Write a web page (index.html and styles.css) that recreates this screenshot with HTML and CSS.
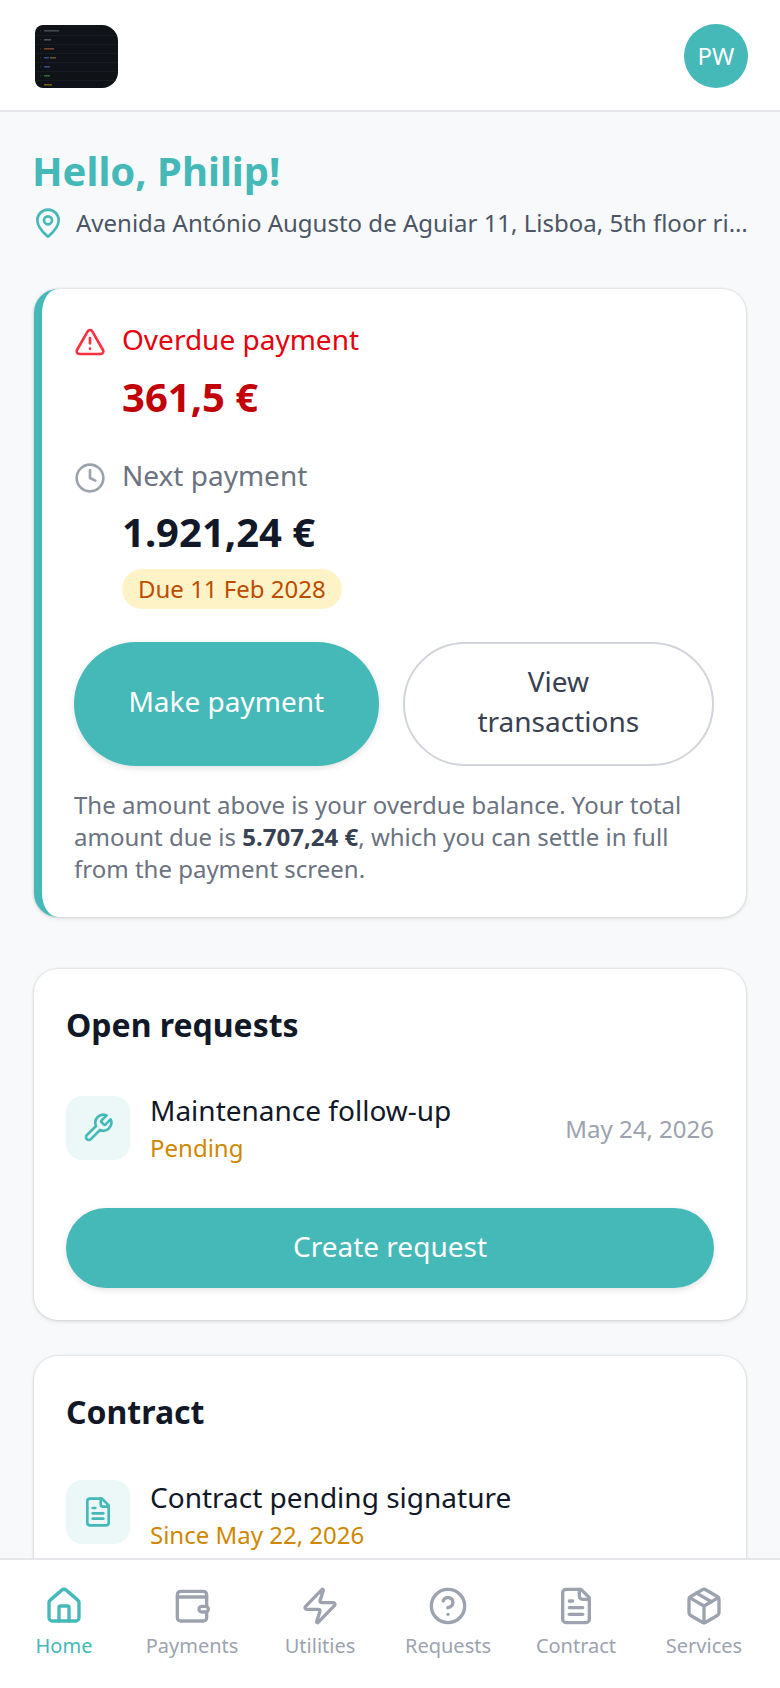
FILE: index.html
```html
<!DOCTYPE html>
<html lang="en">
<head>
<meta charset="utf-8">
<title>Home</title>
<link rel="stylesheet" href="styles.css">
</head>
<body>
<div class="app">
  <header class="topbar">
    <div class="logo">
      <svg viewBox="0 0 83 63" width="83" height="63"><g class="logo-rows">
        <path class="logo-lines" d="M0 10.500h83M0 19.500h83M0 28.500h83M0 37.500h83M0 46.500h83M0 55.500h83"/>
        <rect x="5" y="5.300" width="1" height="1" fill="#4a4f55"/>
        <rect x="5" y="14.300" width="1" height="1" fill="#4a4f55"/>
        <rect x="5" y="23.300" width="1" height="1" fill="#4a4f55"/>
        <rect x="5" y="32.300" width="1" height="1" fill="#4a4f55"/>
        <rect x="5" y="41.300" width="1" height="1" fill="#4a4f55"/>
        <rect x="5" y="50.300" width="1" height="1" fill="#4a4f55"/>
        <rect x="9" y="5" width="15" height="1.600" fill="#5a5f66"/>
        <rect x="9" y="14" width="7" height="1.600" fill="#6a6d70"/>
        <rect x="9" y="23" width="10" height="1.600" fill="#a8562e"/>
        <rect x="9" y="32" width="5" height="1.600" fill="#3f68b0"/>
        <rect x="15" y="32" width="6" height="1.600" fill="#8a6f30"/>
        <rect x="9" y="41" width="6" height="1.600" fill="#3f68b0"/>
        <rect x="9" y="50" width="6" height="1.600" fill="#3f8a3f"/>
        <rect x="9" y="59" width="8" height="1.600" fill="#9a7a20"/>
      </g></svg>
    </div>
    <div class="avatar">PW</div>
  </header>
  <main class="content">
    <h1 class="hello">Hello, Philip!</h1>
    <div class="address">
      <svg class="icon-32 teal" viewBox="0 0 24 24"><path d="M20 10c0 4.993-5.539 10.193-7.399 11.799a1 1 0 0 1-1.202 0C9.539 20.193 4 14.993 4 10a8 8 0 0 1 16 0"/><circle cx="12" cy="10" r="3"/></svg>
      <span class="address-text">Avenida António Augusto de Aguiar 11, Lisboa, 5th floor right</span>
    </div>
    <section class="card pay-card">
      <div class="pay-row">
        <svg class="icon-32 red" viewBox="0 0 24 24"><path d="m21.730 18-8-14a2 2 0 0 0-3.480 0l-8 14A2 2 0 0 0 4 21h16a2 2 0 0 0 1.730-3"/><path d="M12 9v4"/><path d="M12 17h.01"/></svg>
        <div class="pay-label overdue">Overdue payment</div>
      </div>
      <div class="amount amount-red">361,5 €</div>
      <div class="pay-row next-row">
        <svg class="icon-32 grey" viewBox="0 0 24 24"><circle cx="12" cy="12" r="10"/><polyline points="12 6 12 12 16 14"/></svg>
        <div class="pay-label">Next payment</div>
      </div>
      <div class="amount amount-next">1.921,24 €</div>
      <div class="badge">Due 11 Feb 2028</div>
      <div class="actions">
        <button class="btn btn-primary">Make payment</button>
        <button class="btn btn-outline">View transactions</button>
      </div>
      <p class="note">The amount above is your overdue balance. Your total amount due is <strong>5.707,24 €</strong>, which you can settle in full from the payment screen.</p>
    </section>
    <section class="card">
      <h2 class="card-title">Open requests</h2>
      <div class="item">
        <div class="tile tile-request">
          <svg class="icon-32 teal" viewBox="0 0 24 24"><path d="M14.700 6.300a1 1 0 0 0 0 1.400l1.600 1.600a1 1 0 0 0 1.400 0l3.770-3.770a6 6 0 0 1-7.940 7.940l-6.910 6.910a2.120 2.120 0 0 1-3-3l6.910-6.910a6 6 0 0 1 7.940-7.940l-3.760 3.760z"/></svg>
        </div>
        <div class="item-body">
          <div class="item-title">Maintenance follow-up</div>
          <div class="item-status">Pending</div>
        </div>
        <div class="item-date">May 24, 2026</div>
      </div>
      <button class="create-btn">Create request</button>
    </section>
    <section class="card">
      <h2 class="card-title">Contract</h2>
      <div class="item">
        <div class="tile tile-contract">
          <svg class="icon-32 teal" viewBox="0 0 24 24"><path d="M15 2H6a2 2 0 0 0-2 2v16a2 2 0 0 0 2 2h12a2 2 0 0 0 2-2V7Z"/><path d="M14 2v4a2 2 0 0 0 2 2h4"/><path d="M10 9H8"/><path d="M16 13H8"/><path d="M16 17H8"/></svg>
        </div>
        <div class="item-body">
          <div class="item-title">Contract pending signature</div>
          <div class="item-status">Since May 22, 2026</div>
        </div>
      </div>
    </section>
  </main>
  <nav class="tabbar">
    <a class="tab tab-active">
      <svg class="icon-40" viewBox="0 0 24 24"><path d="M15 21v-8a1 1 0 0 0-1-1h-4a1 1 0 0 0-1 1v8"/><path d="M3 10a2 2 0 0 1 .709-1.528l7-5.999a2 2 0 0 1 2.582 0l7 5.999A2 2 0 0 1 21 10v9a2 2 0 0 1-2 2H5a2 2 0 0 1-2-2z"/></svg>
      <span>Home</span>
    </a>
    <a class="tab">
      <svg class="icon-40" viewBox="0 0 24 24"><path d="M20.800 12V5.200a2 2 0 0 0-2-2H5.200a2 2 0 0 0-2 2V19a2 2 0 0 0 2 2h13.600a2 2 0 0 0 2-2v-3.400"/><path d="M3.200 6.600h17.600"/><rect x="16.200" y="12.200" width="5.600" height="3.400" rx="1.700"/></svg>
      <span>Payments</span>
    </a>
    <a class="tab">
      <svg class="icon-40" viewBox="0 0 24 24"><path d="M4 14a1 1 0 0 1-.78-1.630l9.900-10.200a.5.5 0 0 1 .86.46l-1.920 6.020A1 1 0 0 0 13 10h7a1 1 0 0 1 .78 1.630l-9.900 10.200a.5.5 0 0 1-.86-.46l1.920-6.020A1 1 0 0 0 11 14z"/></svg>
      <span>Utilities</span>
    </a>
    <a class="tab">
      <svg class="icon-40" viewBox="0 0 24 24"><circle cx="12" cy="12" r="10"/><path d="M9.090 9a3 3 0 0 1 5.830 1c0 2-3 3-3 3"/><path d="M12 17h.01"/></svg>
      <span>Requests</span>
    </a>
    <a class="tab">
      <svg class="icon-40" viewBox="0 0 24 24"><path d="M15 2H6a2 2 0 0 0-2 2v16a2 2 0 0 0 2 2h12a2 2 0 0 0 2-2V7Z"/><path d="M14 2v4a2 2 0 0 0 2 2h4"/><path d="M10 9H8"/><path d="M16 13H8"/><path d="M16 17H8"/></svg>
      <span>Contract</span>
    </a>
    <a class="tab">
      <svg class="icon-40" viewBox="0 0 24 24"><path d="M11 21.730a2 2 0 0 0 2 0l7-4A2 2 0 0 0 21 16V8a2 2 0 0 0-1-1.730l-7-4a2 2 0 0 0-2 0l-7 4A2 2 0 0 0 3 8v8a2 2 0 0 0 1 1.730z"/><path d="M12 22V12"/><polyline points="3.290 7 12 12 20.710 7"/><path d="m7.500 4.270 9 5.150"/></svg>
      <span>Services</span>
    </a>
  </nav>
</div>
</body>
</html>
```

FILE: styles.css
```css
* { box-sizing: border-box; }
html, body { margin: 0; height: 100%; }
body { font-family: "Noto Sans", sans-serif; color: #111827; background: #f8f9fb; }
svg { display: block; flex: none; fill: none; stroke: currentColor; stroke-width: 2; stroke-linecap: round; stroke-linejoin: round; }
.app { height: 1688px; display: flex; flex-direction: column; overflow: hidden; }

.topbar { flex: none; height: 112px; padding: 24px 32px 22px 35px; display: flex; align-items: flex-start; justify-content: space-between; background: #fff; border-bottom: 2px solid #e5e7eb; }
.logo { width: 83px; height: 63px; margin-top: 1px; background: #0f1318; border-radius: 8px 16px 16px 8px; overflow: hidden; }
.logo svg { stroke: none; }
.logo-rows { filter: blur(0.6px); opacity: .7; }
.logo-lines { stroke: #1c2128; stroke-width: 1; }
.avatar { width: 64px; height: 64px; padding-bottom: 2px; border-radius: 50%; background: #45b8b8; color: #fff; font-size: 24px; display: flex; align-items: center; justify-content: center; }

.content { flex: 1; min-height: 0; overflow: hidden; padding: 29px 32px 0; display: flex; flex-direction: column; gap: 32px; }
.hello { margin: 0 0 -26px; font-size: 40px; line-height: 60px; font-weight: 700; color: #45b8b8; }
.address { display: flex; align-items: center; gap: 12px; font-size: 24px; line-height: 32px; color: #4b5563; margin-bottom: 16px; }
.address-text { min-width: 0; white-space: nowrap; overflow: hidden; text-overflow: ellipsis; }
.teal { color: #45b8b8; }
.red { color: #ff3040; }
.grey { color: #9ca3af; }
.icon-32 { width: 32px; height: 32px; }
.icon-40 { width: 40px; height: 40px; }

.card { flex: none; margin: 2px; background: #fff; border-radius: 24px; padding: 32px; box-shadow: 0 0 2px 1px rgba(0,0,0,.09), 0 2px 4px rgba(0,0,0,.08); }
.pay-card { border-left: 8px solid #45b8b8; padding-top: 30px; margin-bottom: 18px; }
.pay-row { display: flex; align-items: flex-start; gap: 16px; }
.pay-row svg { margin-top: 7px; }
.pay-label { font-size: 28px; line-height: 40px; color: #6b7280; }
.overdue { color: #e7000b; }
.next-row { margin-top: 30px; }
.amount { margin: 10px 0 0 48px; font-size: 40px; line-height: 56px; font-weight: 700; color: #111827; }
.amount-next { margin-top: 9px; }
.amount-red { color: #c10007; }
.badge { display: inline-block; margin: 9px 0 0 48px; padding: 0 16px; height: 40px; line-height: 40px; border-radius: 20px; background: #fef3c7; color: #bb4d00; font-size: 24px; }
.actions { display: flex; gap: 24px; margin-top: 33px; }
.btn { height: 124px; border-radius: 62px; font: inherit; font-size: 28px; line-height: 40px; padding: 0 48px 7px; }
.btn-primary { flex: 306 1 0; background: #45b8b8; color: #fff; border: none; box-shadow: 0 2px 6px rgba(0,0,0,.12); }
.btn-outline { flex: 310 1 0; background: #fff; color: #374151; border: 2px solid #d1d5db; padding-bottom: 6px; }
.note { margin: 23px 0 0; font-size: 24px; line-height: 32px; color: #6b7280; }
.note strong { color: #374151; font-weight: 700; }

.card-title { margin: 0 0 41px; font-size: 32px; line-height: 48px; font-weight: 700; color: #111827; }
.item { display: flex; align-items: flex-start; gap: 20px; }
.tile { flex: none; width: 64px; height: 64px; border-radius: 16px; background: #ecf8f8; display: flex; align-items: center; justify-content: center; }
.tile-request { margin-top: 6px; }
.tile-contract { margin-top: 3px; }
.item-body { flex: 1; min-width: 0; }
.item-title { font-size: 28px; line-height: 40px; color: #111827; }
.item-status { font-size: 24px; line-height: 36px; color: #d08700; }
.item-date { align-self: center; font-size: 24px; color: #9ca3af; }
.create-btn { display: block; width: 100%; height: 80px; margin-top: 42px; padding: 0 0 5px; border: none; border-radius: 40px; background: #45b8b8; color: #fff; font: inherit; font-size: 28px; box-shadow: 0 2px 6px rgba(0,0,0,.12); }

.tabbar { flex: none; height: 130px; padding: 26px 12px 0 0; display: flex; background: #fff; border-top: 2px solid #e5e7eb; }
.tab { flex: 1; display: flex; flex-direction: column; align-items: center; gap: 4px; color: #9ca3af; font-size: 20px; line-height: 32px; }
.tab-active { color: #45b8b8; }
```
